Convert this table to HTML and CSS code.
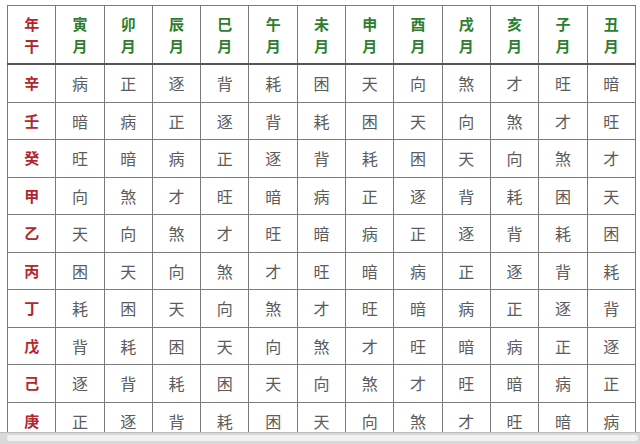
FILE: index.html
```html
<!DOCTYPE html>
<html lang="zh">
<head>
<meta charset="utf-8">
<link rel="stylesheet" href="styles.css">
</head>
<body>
<div class="frame">
<table class="grid">
<thead>
<tr>
<th class="gan"><span class="ch">年</span><span class="ch">干</span></th>
<th><span class="ch">寅</span><span class="ch">月</span></th><th><span class="ch">卯</span><span class="ch">月</span></th><th><span class="ch">辰</span><span class="ch">月</span></th><th><span class="ch">巳</span><span class="ch">月</span></th><th><span class="ch">午</span><span class="ch">月</span></th><th><span class="ch">未</span><span class="ch">月</span></th>
<th><span class="ch">申</span><span class="ch">月</span></th><th><span class="ch">酉</span><span class="ch">月</span></th><th><span class="ch">戌</span><span class="ch">月</span></th><th><span class="ch">亥</span><span class="ch">月</span></th><th><span class="ch">子</span><span class="ch">月</span></th><th><span class="ch">丑</span><span class="ch">月</span></th>
</tr>
</thead>
<tbody>
<tr><th class="gan">辛</th><td>病</td><td>正</td><td>逐</td><td>背</td><td>耗</td><td>困</td><td>天</td><td>向</td><td>煞</td><td>才</td><td>旺</td><td>暗</td></tr>
<tr><th class="gan">壬</th><td>暗</td><td>病</td><td>正</td><td>逐</td><td>背</td><td>耗</td><td>困</td><td>天</td><td>向</td><td>煞</td><td>才</td><td>旺</td></tr>
<tr><th class="gan">癸</th><td>旺</td><td>暗</td><td>病</td><td>正</td><td>逐</td><td>背</td><td>耗</td><td>困</td><td>天</td><td>向</td><td>煞</td><td>才</td></tr>
<tr><th class="gan">甲</th><td>向</td><td>煞</td><td>才</td><td>旺</td><td>暗</td><td>病</td><td>正</td><td>逐</td><td>背</td><td>耗</td><td>困</td><td>天</td></tr>
<tr><th class="gan">乙</th><td>天</td><td>向</td><td>煞</td><td>才</td><td>旺</td><td>暗</td><td>病</td><td>正</td><td>逐</td><td>背</td><td>耗</td><td>困</td></tr>
<tr><th class="gan">丙</th><td>困</td><td>天</td><td>向</td><td>煞</td><td>才</td><td>旺</td><td>暗</td><td>病</td><td>正</td><td>逐</td><td>背</td><td>耗</td></tr>
<tr><th class="gan">丁</th><td>耗</td><td>困</td><td>天</td><td>向</td><td>煞</td><td>才</td><td>旺</td><td>暗</td><td>病</td><td>正</td><td>逐</td><td>背</td></tr>
<tr><th class="gan">戊</th><td>背</td><td>耗</td><td>困</td><td>天</td><td>向</td><td>煞</td><td>才</td><td>旺</td><td>暗</td><td>病</td><td>正</td><td>逐</td></tr>
<tr><th class="gan">己</th><td>逐</td><td>背</td><td>耗</td><td>困</td><td>天</td><td>向</td><td>煞</td><td>才</td><td>旺</td><td>暗</td><td>病</td><td>正</td></tr>
<tr><th class="gan">庚</th><td>正</td><td>逐</td><td>背</td><td>耗</td><td>困</td><td>天</td><td>向</td><td>煞</td><td>才</td><td>旺</td><td>暗</td><td>病</td></tr>
</tbody>
</table>
</div>
<div class="band"><div class="band-inner"></div></div>
</body>
</html>
```
FILE: styles.css
```css
html, body {
  margin: 0;
  padding: 0;
  background: #ffffff;
}
body {
  width: 640px;
  height: 444px;
  overflow: hidden;
  font-family: "Noto Sans CJK SC", "Noto Sans", sans-serif;
}
.frame {
  margin: 5px 0 0 7px;
  height: 427px;
  overflow: hidden;
}
.grid {
  border-collapse: collapse;
  table-layout: fixed;
  width: 629px;
  border: 1px solid #5a5a5a;
}
.grid th, .grid td {
  border: 1px solid #7a7a7a;
  text-align: center;
  vertical-align: middle;
  padding: 0;
}
.grid thead th {
  height: 57px;
  font-size: 15px;
  line-height: 22px;
  font-weight: 700;
  color: #2f7d2f;
  border-bottom: 2px solid #555555;
}
.ch {
  display: block;
  height: 22px;
  line-height: 22px;
}
.grid thead th.gan, .grid th.gan {
  color: #b3262c;
  font-weight: 700;
}
.grid tbody th, .grid tbody td {
  height: 36.5px;
  font-size: 16px;
  line-height: 20px;
}
.grid tbody th.gan {
  font-size: 15px;
}
.grid tbody td {
  color: #5c5c5c;
  font-weight: 400;
}
.band {
  height: 12px;
  background: #d9d9d9;
  border-top: 1px solid #bdbdbd;
  box-sizing: border-box;
  padding: 2px 2px 0 7px;
}
.band-inner {
  height: 6px;
  background: #f2f2f2;
  border-radius: 3px;
}
```
